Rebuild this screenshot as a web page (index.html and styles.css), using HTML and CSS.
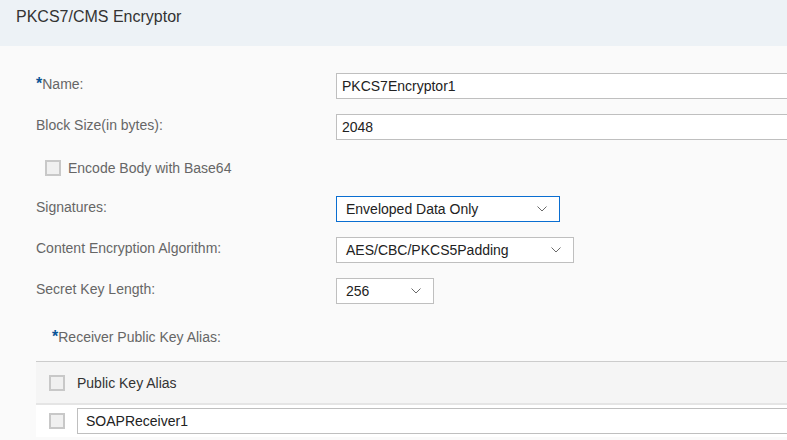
FILE: index.html
```html
<!DOCTYPE html>
<html lang="en">
<head>
<meta charset="utf-8">
<title>PKCS7/CMS Encryptor</title>
<link rel="stylesheet" href="styles.css">
</head>
<body>
<header class="titlebar">
  <h1 class="title">PKCS7/CMS Encryptor</h1>
</header>
<main class="form">
  <div class="row">
    <div class="label"><span class="req">*</span>Name:</div>
    <div class="field">PKCS7Encryptor1</div>
  </div>
  <div class="row">
    <div class="label">Block Size(in bytes):</div>
    <div class="field">2048</div>
  </div>
  <div class="row">
    <span class="check check-indent"></span>
    <span class="check-label">Encode Body with Base64</span>
  </div>
  <div class="row">
    <div class="label">Signatures:</div>
    <div class="select select-focus select-sig">
      <span>Enveloped Data Only</span>
      <svg class="chev" width="10" height="6" viewBox="0 0 10 6"><polyline points="0.5,0.5 5,5 9.5,0.5" fill="none" stroke="#6a6a6a" stroke-width="1"/></svg>
    </div>
  </div>
  <div class="row">
    <div class="label">Content Encryption Algorithm:</div>
    <div class="select select-alg">
      <span>AES/CBC/PKCS5Padding</span>
      <svg class="chev" width="10" height="6" viewBox="0 0 10 6"><polyline points="0.5,0.5 5,5 9.5,0.5" fill="none" stroke="#6a6a6a" stroke-width="1"/></svg>
    </div>
  </div>
  <div class="row">
    <div class="label">Secret Key Length:</div>
    <div class="select select-len">
      <span>256</span>
      <svg class="chev" width="10" height="6" viewBox="0 0 10 6"><polyline points="0.5,0.5 5,5 9.5,0.5" fill="none" stroke="#6a6a6a" stroke-width="1"/></svg>
    </div>
  </div>
  <div class="section-label"><span class="req">*</span>Receiver Public Key Alias:</div>
  <div class="table">
    <div class="thead">
      <span class="check"></span>
      <span class="th-text">Public Key Alias</span>
    </div>
    <div class="trow">
      <span class="check"></span>
      <div class="field field-cell">SOAPReceiver1</div>
    </div>
  </div>
</main>
</body>
</html>
```

FILE: styles.css
```css
html, body {
  margin: 0;
  padding: 0;
  height: 100%;
  overflow: hidden;
}

body {
  background: #fafafa;
  font-family: Arial, "Liberation Sans", sans-serif;
  width: 787px;
}

.titlebar {
  height: 46px;
  box-sizing: border-box;
  padding: 8px 16px 0;
  background: #edf2f6;
}

.title {
  margin: 0;
  font-size: 16px;
  line-height: 18px;
  font-weight: normal;
  color: #333;
}

.form {
  padding: 27px 0 0 36px;
}

.row {
  display: flex;
  align-items: center;
  height: 26px;
  margin-bottom: 15px;
}

.label {
  width: 300px;
  flex: none;
  font-size: 14px;
  line-height: 16px;
  color: #666;
  margin-bottom: 4px;
}

.req {
  color: #0a5598;
  font-weight: bold;
  font-size: 16px;
  line-height: 0;
}

.field {
  width: 600px;
  flex: none;
  height: 26px;
  box-sizing: border-box;
  border: 1px solid #bfbfbf;
  background: #fff;
  padding: 0 5px;
  display: flex;
  align-items: center;
  font-size: 14px;
  color: #222;
}

.select {
  height: 26px;
  box-sizing: border-box;
  border: 1px solid #bfbfbf;
  background: #fff;
  padding: 0 12px 0 9px;
  display: flex;
  align-items: center;
  justify-content: space-between;
  font-size: 14px;
  color: #222;
  flex: none;
}

.select-focus {
  border-color: #0a6ed1;
}

.select-sig { width: 224px; }
.select-alg { width: 238px; }
.select-len { width: 98px; }

.chev {
  display: block;
  flex: none;
}

.check {
  width: 16px;
  height: 16px;
  box-sizing: border-box;
  border: 2px solid #c8c8c8;
  background: #f0f0f0;
  flex: none;
  display: block;
}

.check-indent {
  margin-left: 9px;
}

.check-label {
  margin-left: 7px;
  font-size: 14px;
  color: #666;
}

.section-label {
  margin-top: 25px;
  padding-left: 16px;
  font-size: 14px;
  line-height: 16px;
  color: #666;
  margin-bottom: 16px;
}

.table {
  width: 751px;
}

.thead {
  height: 41px;
  display: flex;
  align-items: center;
  padding-left: 13px;
  background: #f5f5f5;
  border-top: 1px solid #cccccc;
  border-bottom: 2px solid #e5e5e5;
}

.th-text {
  margin-left: 12px;
  font-size: 14px;
  color: #333;
}

.trow {
  display: flex;
  align-items: center;
  padding: 3px 0 3px 13px;
  background: #fff;
}

.field-cell {
  margin-left: 12px;
  width: 720px;
  padding-left: 8px;
}
```
